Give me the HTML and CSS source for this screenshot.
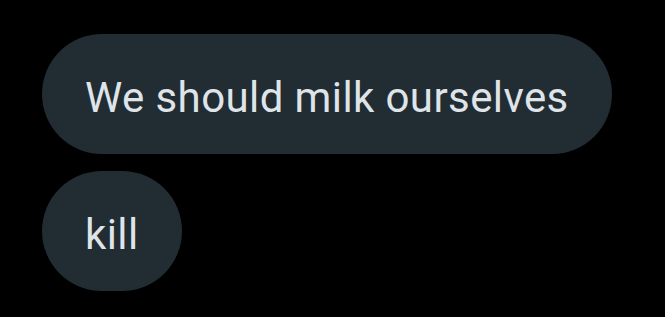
FILE: index.html
```html
<!DOCTYPE html>
<html>
<head>
<meta charset="utf-8">
<link rel="stylesheet" href="styles.css">
</head>
<body>
<div class="thread">
  <div class="bubble">We should milk ourselves</div>
  <div class="bubble">kill</div>
</div>
</body>
</html>
```
FILE: styles.css
```css
html, body {
  margin: 0;
  background: #000;
}
body {
  width: 665px;
  height: 317px;
  overflow: hidden;
}
.thread {
  display: flex;
  flex-direction: column;
  align-items: flex-start;
  gap: 17px;
  padding: 34px 0 0 42px;
}
.bubble {
  background: #222c33;
  color: #dfe4e8;
  font-family: Roboto, "Noto Sans", sans-serif;
  font-size: 42px;
  letter-spacing: 0.4px;
  line-height: 113px;
  height: 113px;
  padding: 7px 43px 0 43px;
  border-radius: 60px;
  white-space: nowrap;
}
```
